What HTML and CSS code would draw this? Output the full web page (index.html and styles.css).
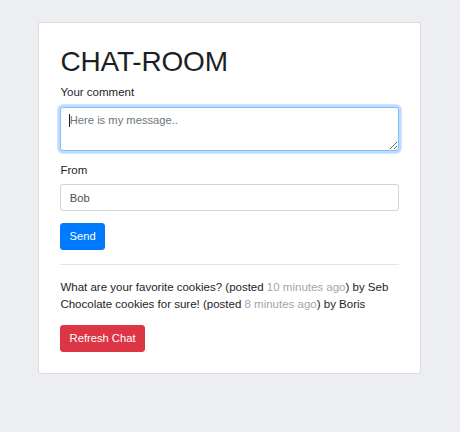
FILE: index.html
```html
<!DOCTYPE html>
<html lang="en">
<head>
<meta charset="utf-8">
<title>Chat-room</title>
<link rel="stylesheet" href="styles.css">
</head>
<body>
<main class="page">
  <section class="card">
    <h1 class="title">CHAT-ROOM</h1>
    <form class="chat-form">
      <div class="form-group">
        <label class="label" for="comment">Your comment</label>
        <div class="field-wrap">
          <textarea id="comment" class="control control-area is-focused" rows="2" placeholder="Here is my message.."></textarea>
          <span class="caret"></span>
        </div>
      </div>
      <div class="form-group">
        <label class="label" for="from">From</label>
        <input id="from" class="control" type="text" value="Bob">
      </div>
      <div class="actions">
        <button type="button" class="btn btn-primary">Send</button>
      </div>
    </form>
    <hr class="divider">
    <div class="messages">
      <p class="message">What are your favorite cookies? (posted <span class="muted">10 minutes ago</span>) by Seb</p>
      <p class="message">Chocolate cookies for sure! (posted <span class="muted">8 minutes ago</span>) by Boris</p>
    </div>
    <div class="actions refresh">
      <button type="button" class="btn btn-danger">Refresh Chat</button>
    </div>
  </section>
</main>
</body>
</html>
```

FILE: styles.css
```css
* {
  box-sizing: border-box;
}

html, body {
  margin: 0;
  padding: 0;
}

body {
  background: #eceef2;
  font-family: "Liberation Sans", Arial, sans-serif;
  font-size: 11.5px;
  line-height: 16.8px;
  color: #212529;
  min-height: 432px;
}

.page {
  padding-top: 22px;
}

.card {
  width: 383px;
  margin: 0 0 0 38px;
  background: #fff;
  border: 1px solid rgba(0, 0, 0, 0.13);
  border-radius: 3px;
  padding: 22px 21.4px 21px 21.4px;
}

.title {
  margin: 0 0 5.6px 0;
  font-size: 28px;
  line-height: 33.6px;
  font-weight: 400;
  letter-spacing: -0.18px;
  color: #1c1f23;
}

.chat-form {
  margin: 0;
}

.form-group {
  margin-bottom: 11.2px;
}

.label {
  display: block;
  margin-bottom: 5.6px;
}

.field-wrap {
  position: relative;
}

.control {
  display: block;
  width: 100%;
  height: 27.2px;
  padding: 4.2px 8.4px;
  font-family: inherit;
  font-size: 11.2px;
  line-height: 16.8px;
  color: #495057;
  background: #fff;
  border: 1px solid #ced4da;
  border-radius: 3px;
  margin: 0;
  outline: none;
}

.control-area {
  height: 44px;
  resize: vertical;
}

.control::placeholder {
  color: #6c757d;
  opacity: 1;
}

.is-focused {
  border-color: #80bdff;
  box-shadow: 0 0 0 2.8px rgba(0, 123, 255, 0.25);
}

.caret {
  position: absolute;
  left: 8.6px;
  top: 7.5px;
  width: 1px;
  height: 13px;
  background: #222;
}

.actions {
  display: flex;
}

.btn {
  display: inline-block;
  height: 27.2px;
  padding: 4.2px 8.2px;
  font-family: inherit;
  font-size: 11.2px;
  line-height: 16.8px;
  border: 1px solid transparent;
  border-radius: 3px;
  color: #fff;
  cursor: pointer;
}

.btn-primary {
  background: #007bff;
  border-color: #007bff;
}

.btn-danger {
  background: #dc3545;
  border-color: #dc3545;
}

.divider {
  margin: 14px 0 14.4px 0;
  border: 0;
  border-top: 1px solid rgba(0, 0, 0, 0.1);
  height: 0;
}

.messages {
  margin-bottom: 12px;
}

.message {
  margin: 0;
}

.muted {
  color: #a3a6aa;
}
```
